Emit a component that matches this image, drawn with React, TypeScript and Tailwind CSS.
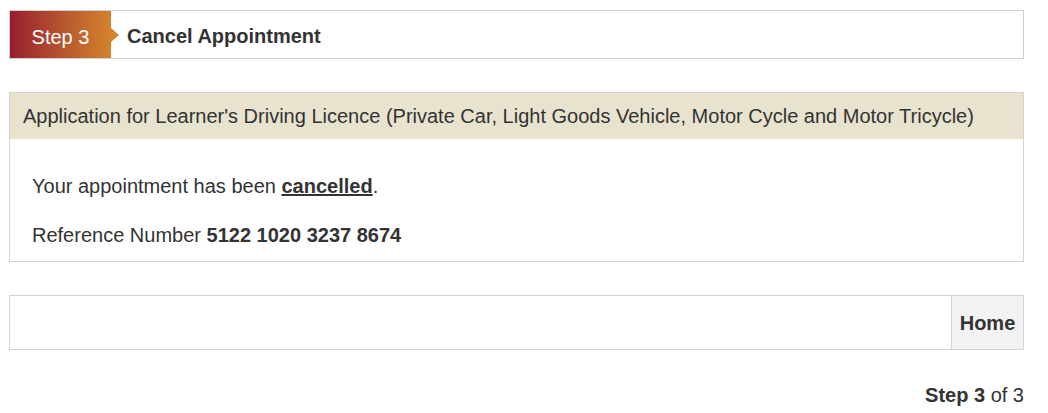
export default function App() {
  return (
    <div className="w-[1048px] h-[413px] bg-white pl-[9px] pr-[24px] pt-[10px] text-[#333] font-['Liberation_Sans',Arial,sans-serif] text-[20px] leading-[22px]">
      <div className="flex h-[49px] border border-[#cfcfcf] bg-white">
        <div className="relative flex w-[101px] items-center justify-center pt-[4px] bg-gradient-to-r from-[#961a2e] to-[#d3832a] text-white">
          Step 3
          <span className="absolute right-[-8px] top-1/2 -translate-y-1/2 border-y-[7px] border-l-[8px] border-y-transparent border-l-[#d3832a]" />
        </div>
        <div className="flex items-center pl-[16px] pt-[3px] font-bold">Cancel Appointment</div>
      </div>

      <div className="mt-[33px] border border-[#d4d4d4]">
        <div className="flex h-[46px] items-center bg-[#e8e3cf] pl-[13px]">
          Application for Learner's Driving Licence (Private Car, Light Goods Vehicle, Motor Cycle and Motor Tricycle)
        </div>
        <div className="px-[22px] pt-[36px] pb-[15px]">
          <p className="mb-[27px]">
            Your appointment has been <span className="font-bold underline">cancelled</span>.
          </p>
          <p>
            Reference Number <span className="font-bold">5122 1020 3237 8674</span>
          </p>
        </div>
      </div>

      <div className="mt-[33px] flex h-[55px] justify-end border border-[#d4d4d4]">
        <button className="w-[72px] border-l border-[#d4d4d4] bg-[#f2f2f2] font-bold text-[#333]">Home</button>
      </div>

      <div className="mt-[34px] text-right">
        <span className="font-bold">Step 3</span> of 3
      </div>
    </div>
  );
}
